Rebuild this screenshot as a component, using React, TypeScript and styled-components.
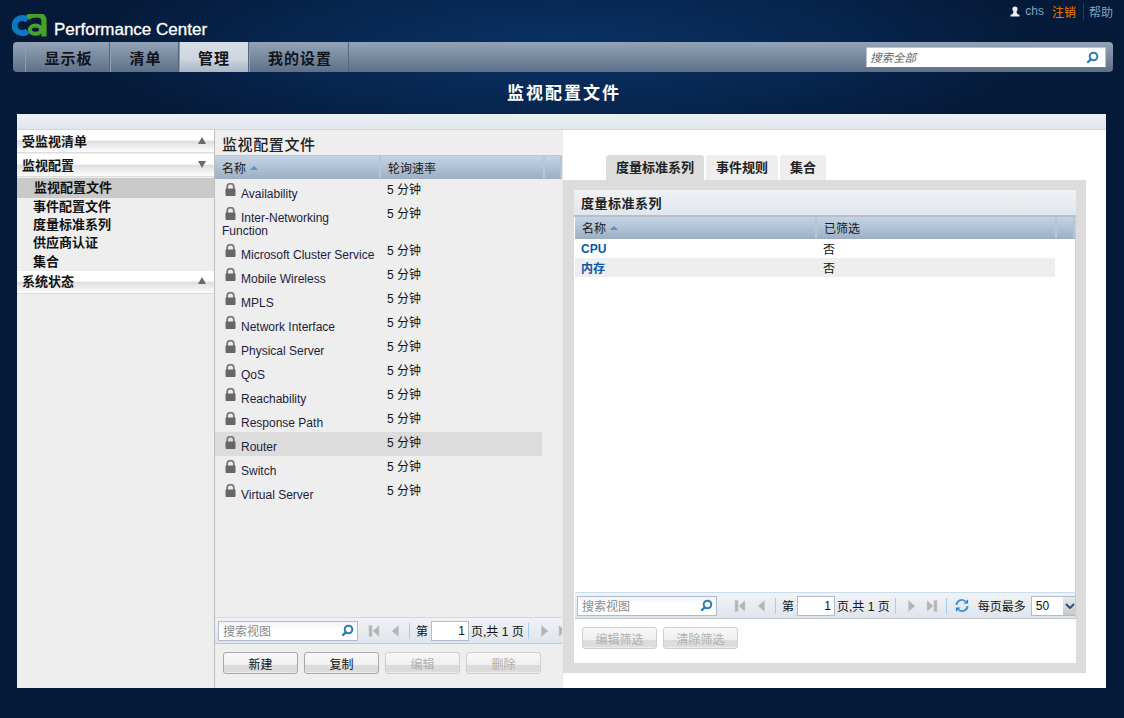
import React from "react";
import styled, { createGlobalStyle } from "styled-components";

const FONT = `"Liberation Sans", "Noto Sans CJK SC", sans-serif`;

const Global = createGlobalStyle`
  html, body { margin: 0; padding: 0; background: #051a38; }
  * { box-sizing: border-box; }
  body { font-family: ${FONT}; font-size: 12px; color: #111; }
`;

const Page = styled.div`
  width: 1124px;
  height: 718px;
  overflow: hidden;
  display: flex;
  flex-direction: column;
  background: radial-gradient(ellipse 480px 110px at 50% 48px, #0a3264 0%, #072650 55%, #051a38 100%);
`;

const Header = styled.header`
  height: 42px;
  display: flex;
  justify-content: space-between;
  padding: 13px 11px 0 12px;
`;

const Brand = styled.div`
  display: flex;
  align-items: flex-start;
  gap: 7px;
`;

const BrandName = styled.span`
  margin-top: 8px;
  color: #fff;
  font-size: 17px;
  line-height: 18px;
  font-weight: 400;
  -webkit-text-stroke: 0.3px #fff;
`;

const UserMenu = styled.div`
  display: flex;
  align-items: center;
  height: 16px;
  margin-top: -10px;
  font-size: 12px;
  color: #7fa3c0;
`;

const UserName = styled.span`
  margin: 0 8px 0 5px;
`;

const Logout = styled.span`
  color: #f47b00;
  padding-right: 7px;
  border-right: 1px solid #23405f;
  margin-right: 5px;
`;

const NavBar = styled.nav`
  width: 1100px;
  height: 30px;
  margin-left: 13px;
  display: flex;
  align-items: stretch;
  padding-left: 12px;
  border-radius: 4px;
  background: linear-gradient(#93a4b7, #5e7088);
`;

const NavTab = styled.div<{ $w: number; $active?: boolean }>`
  width: ${(p) => p.$w}px;
  display: flex;
  align-items: center;
  justify-content: center;
  padding-left: ${(p) => (p.$active ? 0 : 2)}px;
  border-left: 1px solid #8c9db1;
  border-right: 1px solid #55667e;
  font-size: 15px;
  font-weight: 700;
  letter-spacing: 1px;
  color: #10141c;
  background: ${(p) => (p.$active ? "linear-gradient(#d6dde6, #ced6e0 55%, #a9b6c6)" : "none")};
`;

const NavSearch = styled.div`
  width: 240px;
  height: 20px;
  margin: 5px 7px 0 auto;
  background: #fff;
  border: 1px solid #b8c4d4;
  border-bottom-color: #fff;
  display: flex;
  align-items: center;
  justify-content: space-between;
  padding: 0 6px 0 3px;
  font-style: italic;
  font-size: 11.5px;
  color: #666;
`;

const PageTitle = styled.h1`
  margin: 0;
  height: 42px;
  display: flex;
  align-items: center;
  justify-content: center;
  padding: 0 0 4px 4px;
  font-size: 17px;
  font-weight: 700;
  letter-spacing: 2px;
  color: #fff;
`;

const Panel = styled.main`
  width: 1089px;
  height: 574px;
  margin-left: 17px;
  display: flex;
  flex-direction: column;
  background: #fff;
`;

const PanelTop = styled.div`
  height: 16px;
  border-radius: 2px 2px 0 0;
  border-bottom: 1px solid #c9d8e8;
  background: linear-gradient(#eef1f4, #dfe6ee);
`;

const PanelBody = styled.div`
  flex: 1;
  min-height: 0;
  display: flex;
`;

const Sidebar = styled.aside`
  width: 198px;
  border-right: 1px solid #bdbdbd;
  background: #eee;
  display: flex;
  flex-direction: column;
`;

const AccHead = styled.div<{ $gap?: number }>`
  height: 23px;
  margin-bottom: ${(p) => p.$gap ?? 0}px;
  display: flex;
  align-items: center;
  justify-content: space-between;
  padding: 0 8px 2px 5px;
  font-size: 13px;
  font-weight: 700;
  color: #141414;
  border-bottom: 1px solid #ddd;
  background: linear-gradient(#fff 0%, #fff 45%, #dedede 52%, #fdfdfd 100%);
`;

const AccArrow = styled.span<{ $down?: boolean }>`
  width: 0;
  height: 0;
  border-left: 4.5px solid transparent;
  border-right: 4.5px solid transparent;
  ${(p) => (p.$down ? "border-top: 7px solid #6a6a6a;" : "border-bottom: 7px solid #6a6a6a;")}
`;

const SideList = styled.div`
  padding: 1px 0 0;
  display: flex;
  flex-direction: column;
`;

const SideItem = styled.div<{ $active?: boolean }>`
  height: ${(p) => (p.$active ? 20 : 18.2)}px;
  line-height: ${(p) => (p.$active ? 20 : 18)}px;
  padding-left: ${(p) => (p.$active ? 17 : 16)}px;
  font-size: 13px;
  font-weight: 700;
  color: #111;
  background: ${(p) => (p.$active ? "#c9c9c9" : "none")};
`;

const Middle = styled.section`
  width: 348px;
  background: #eee;
  display: flex;
  flex-direction: column;
  border-right: 1px solid #e8e8e8;
  overflow: hidden;
`;

const PaneHeading = styled.div`
  height: 26px;
  padding: 6px 0 0 7px;
  line-height: 18px;
  font-size: 15px;
  font-weight: 500;
  letter-spacing: 0.6px;
  color: #222;
  border-bottom: 1px solid #c4c8d0;
`;

const HeadRow = styled.div<{ $cols: string; $h: number }>`
  height: ${(p) => p.$h}px;
  flex: none;
  display: grid;
  grid-template-columns: ${(p) => p.$cols};
  background: linear-gradient(#c4d4e6, #9cafc3);
`;

const HeadCell = styled.div`
  display: flex;
  align-items: center;
  gap: 4px;
  padding-left: 7px;
  margin-bottom: 1px;
  font-size: 12px;
  color: #1a1a1a;
  border-right: 2px solid #b5c6d9;
`;

const SortArrow = styled.span`
  width: 0;
  height: 0;
  margin-top: 1px;
  border-left: 4px solid transparent;
  border-right: 4px solid transparent;
  border-bottom: 4px solid #5d8fcf;
`;

const RowList = styled.div`
  flex: 1;
  min-height: 0;
`;

const ProfileRow = styled.div<{ $selected?: boolean }>`
  width: 327px;
  display: grid;
  grid-template-columns: 165px 1fr;
  background: ${(p) => (p.$selected ? "#dcdcdc" : "none")};
`;

const ProfileName = styled.div`
  padding: 9px 3px 2px 7px;
  font-size: 12px;
  line-height: 13px;
  color: #1c1c3a;
`;

const ProfileLock = styled.svg`
  float: left;
  width: 11px;
  height: 13px;
  margin: -5px 5px 0 3px;
`;

const ProfileRate = styled.div`
  padding: 4px 0 0 7px;
  font-size: 12px;
  line-height: 14px;
  color: #111;
`;

const Toolbar = styled.div<{ $pad: number }>`
  height: 27px;
  flex: none;
  display: flex;
  align-items: center;
  padding-left: ${(p) => p.$pad}px;
  overflow: hidden;
  border-top: 1px solid #c9dcec;
  border-bottom: 1px solid #c2c7d2;
  background: linear-gradient(#f0f3f6, #dfe5ec);
  white-space: nowrap;
  font-size: 12px;
  color: #111;
`;

const SearchField = styled.div`
  width: 140px;
  height: 20px;
  flex: none;
  display: flex;
  align-items: center;
  justify-content: space-between;
  padding: 0 3px 0 4px;
  border: 1px solid #b3bacd;
  background: linear-gradient(#f0f3f8, #fff 40%);
  color: #8a8a8a;
  font-size: 12px;
`;

const PagerIcon = styled.svg<{ $m: string }>`
  width: 12px;
  height: 14px;
  flex: none;
  margin: ${(p) => p.$m};
`;

const Divider = styled.span<{ $m: string }>`
  width: 1px;
  height: 16px;
  flex: none;
  background: #a9cdf0;
  margin: ${(p) => p.$m};
`;

const PageInput = styled.div`
  width: 38px;
  height: 20px;
  flex: none;
  margin: 0 2px 0 3px;
  padding-right: 3px;
  line-height: 18px;
  text-align: right;
  border: 1px solid #b3bacd;
  background: #fff;
  color: #111;
`;

const PerPage = styled.span`
  margin: 0 5px 0 0;
`;

const SizeSelect = styled.div`
  width: 60px;
  height: 20px;
  flex: none;
  display: flex;
  border: 1px solid #b3bacd;
  background: #fff;
`;

const SizeValue = styled.span`
  width: 31px;
  flex: none;
  padding-left: 4px;
  line-height: 18px;
`;

const SizeCaret = styled.span`
  width: 14px;
  flex: none;
  display: flex;
  align-items: center;
  justify-content: center;
  background: linear-gradient(#e8e8e8, #c8c8c8);
`;

const ButtonRow = styled.div<{ $pad: string }>`
  display: flex;
  gap: 6px;
  padding: ${(p) => p.$pad};
`;

const Button = styled.div<{ $disabled?: boolean }>`
  width: 75px;
  height: 22px;
  display: flex;
  align-items: center;
  justify-content: center;
  font-size: 12px;
  color: ${(p) => (p.$disabled ? "#b0b0b0" : "#111")};
  border: 1px solid ${(p) => (p.$disabled ? "#cfcfcf" : "#a8a8a8")};
  border-radius: 3px;
  background: linear-gradient(#f8f8f8 0%, #f0f0f0 58%, #dcdcdc 60%, #dcdcdc 92%, #f2f2f2 100%);
`;

const Right = styled.section`
  flex: 1;
  min-width: 0;
  padding-top: 25px;
  display: flex;
  flex-direction: column;
  background: #fff;
`;

const Tabs = styled.div`
  height: 25px;
  padding-left: 43px;
  display: flex;
  gap: 2px;
`;

const Tab = styled.div<{ $active?: boolean }>`
  padding: 0 10px 2px;
  display: flex;
  align-items: center;
  font-size: 13px;
  font-weight: 700;
  color: #222;
  border-radius: 3px 3px 0 0;
  background: ${(p) => (p.$active ? "#dcdcdc" : "#eee")};
`;

const Frame = styled.div`
  width: 523px;
  height: 493px;
  padding: 10px 10px 10px 11px;
  background: #dcdcdc;
`;

const Inner = styled.div`
  height: 100%;
  display: flex;
  flex-direction: column;
  background: #fff;
  padding-left: 1px;
`;

const InnerHeading = styled.div`
  height: 27px;
  margin-left: -1px;
  flex: none;
  padding: 6px 0 0 7px;
  line-height: 16px;
  font-size: 13px;
  font-weight: 700;
  letter-spacing: 0.5px;
  color: #222;
  border-bottom: 2px solid #b9bdc8;
  background: linear-gradient(#f0f2f4, #dfe6ee);
`;

const MetricBody = styled.div`
  flex: 1;
  min-height: 0;
  display: flex;
  flex-direction: column;
  border-right: 1px solid #ccc;
`;

const MetricRows = styled.div`
  flex: 1;
`;

const MetricRow = styled.div<{ $alt?: boolean }>`
  width: 480px;
  height: 19px;
  display: grid;
  grid-template-columns: 242px 1fr;
  align-items: center;
  background: ${(p) => (p.$alt ? "#eee" : "#fff")};
`;

const MetricName = styled.span`
  padding-left: 6px;
  font-size: 12px;
  font-weight: 700;
  color: #0a56a8;
`;

const MetricValue = styled.span`
  padding-left: 6px;
  font-size: 12px;
  color: #111;
`;

const Spaced = styled.span`
  white-space: pre;
`;

const SearchIcon = () => (
  <svg width="13" height="13" viewBox="0 0 13 13" fill="none">
    <circle cx="7.5" cy="5.5" r="3.8" stroke="#2b7db8" strokeWidth="2" />
    <path d="M4.8 8.3 2 11" stroke="#2b7db8" strokeWidth="2.4" strokeLinecap="round" />
  </svg>
);

const Lock = () => (
  <ProfileLock viewBox="0 0 11 13">
    <path d="M2.2 6V3.8a3.3 3.3 0 0 1 6.6 0V6" fill="none" stroke="#777" strokeWidth="1.8" />
    <rect x="0.5" y="5.5" width="10" height="7.5" rx="1" fill="#666" />
  </ProfileLock>
);

const arrowFill = "#b4b4b4";
const arrowStroke = "#c9c9c9";

const First = ({ m }: { m: string }) => (
  <PagerIcon $m={m} viewBox="0 0 12 14">
    <rect x="1" y="1.5" width="3" height="11" fill={arrowFill} stroke={arrowStroke} strokeWidth="0.6" />
    <path d="M11 1.5v11L5 7z" fill={arrowFill} stroke={arrowStroke} strokeWidth="0.6" />
  </PagerIcon>
);
const Prev = ({ m }: { m: string }) => (
  <PagerIcon $m={m} viewBox="0 0 12 14">
    <path d="M9.5 1.5v11L3 7z" fill={arrowFill} stroke={arrowStroke} strokeWidth="0.6" />
  </PagerIcon>
);
const Next = ({ m }: { m: string }) => (
  <PagerIcon $m={m} viewBox="0 0 12 14">
    <path d="M2.5 1.5v11L9 7z" fill={arrowFill} stroke={arrowStroke} strokeWidth="0.6" />
  </PagerIcon>
);
const Last = ({ m }: { m: string }) => (
  <PagerIcon $m={m} viewBox="0 0 12 14">
    <path d="M1 1.5v11L7 7z" fill={arrowFill} stroke={arrowStroke} strokeWidth="0.6" />
    <rect x="8" y="1.5" width="3" height="11" fill={arrowFill} stroke={arrowStroke} strokeWidth="0.6" />
  </PagerIcon>
);

const RefreshIcon = styled.svg`
  flex: none;
  margin: 0 9px 0 8px;
`;

const Refresh = () => (
  <RefreshIcon width="14" height="15" viewBox="0 0 15 15" fill="none">
    <path d="M1.6 7A5.6 5.6 0 0 1 11 3" stroke="#3b93e0" strokeWidth="2" />
    <path d="M13.4 8A5.6 5.6 0 0 1 4 12" stroke="#3b93e0" strokeWidth="2" />
    <path d="M9 5.4h5V.8z" fill="#2f7fd0" />
    <path d="M6 9.6H1v4.6z" fill="#2f7fd0" />
  </RefreshIcon>
);

const LogoMark = styled.svg`
  margin-top: 1px;
  flex: none;
`;

const Logo = () => (
  <LogoMark width="35" height="23" viewBox="0 0 35 23" fill="none">
    <path d="M15.6 6.2A7.6 7.6 0 1 0 15.6 16.8" stroke="#0d78c2" strokeWidth="6" />
    <path d="M15.5 3.6C18 1.6 21 1 24.5 1c5 0 7.5 2 7.5 6v15.6" stroke="#46a32a" strokeWidth="5.2" fill="none" />
    <ellipse cx="23.5" cy="15.6" rx="5.6" ry="4.2" stroke="#46a32a" strokeWidth="4" />
  </LogoMark>
);

const Person = () => (
  <svg width="10" height="11" viewBox="0 0 10 11">
    <circle cx="5" cy="3" r="2.6" fill="#e8eef4" />
    <path d="M3.6 5h2.8L7 7.5 9.5 9v1.5H.5V9L3 7.5z" fill="#e8eef4" />
  </svg>
);

const profiles = [
  "Availability",
  "Inter-Networking Function",
  "Microsoft Cluster Service",
  "Mobile Wireless",
  "MPLS",
  "Network Interface",
  "Physical Server",
  "QoS",
  "Reachability",
  "Response Path",
  "Router",
  "Switch",
  "Virtual Server",
];

export default function App() {
  return (
    <Page>
      <Global />
      <Header>
        <Brand>
          <Logo />
          <BrandName>Performance Center</BrandName>
        </Brand>
        <UserMenu>
          <Person />
          <UserName>chs</UserName>
          <Logout>注销</Logout>
          <span>帮助</span>
        </UserMenu>
      </Header>
      <NavBar>
        <NavTab $w={85}>显示板</NavTab>
        <NavTab $w={69}>清单</NavTab>
        <NavTab $w={70} $active>管理</NavTab>
        <NavTab $w={100}>我的设置</NavTab>
        <NavSearch>
          <span>搜索全部</span>
          <SearchIcon />
        </NavSearch>
      </NavBar>
      <PageTitle>监视配置文件</PageTitle>
      <Panel>
        <PanelTop />
        <PanelBody>
          <Sidebar>
            <AccHead $gap={1}>受监视清单<AccArrow /></AccHead>
            <AccHead>监视配置<AccArrow $down /></AccHead>
            <SideList>
              <SideItem $active>监视配置文件</SideItem>
              <SideItem>事件配置文件</SideItem>
              <SideItem>度量标准系列</SideItem>
              <SideItem>供应商认证</SideItem>
              <SideItem>集合</SideItem>
            </SideList>
            <AccHead>系统状态<AccArrow /></AccHead>
          </Sidebar>
          <Middle>
            <PaneHeading>监视配置文件</PaneHeading>
            <HeadRow $h={23} $cols="166px 164px 1fr">
              <HeadCell>名称<SortArrow /></HeadCell>
              <HeadCell>轮询速率</HeadCell>
              <HeadCell />
            </HeadRow>
            <RowList>
              {profiles.map((name) => (
                <ProfileRow key={name} $selected={name === "Router"}>
                  <ProfileName>
                    <Lock />
                    {name}
                  </ProfileName>
                  <ProfileRate>5 分钟</ProfileRate>
                </ProfileRow>
              ))}
            </RowList>
            <Toolbar $pad={3}>
              <SearchField>
                <span>搜索视图</span>
                <SearchIcon />
              </SearchField>
              <First m="0 0 0 10px" />
              <Prev m="0 0 0 9px" />
              <Divider $m="0 6px 0 8px" />
              <span>第</span>
              <PageInput>1</PageInput>
              <Spaced>页,共 1 页</Spaced>
              <Divider $m="0 5px 0 4px" />
              <Next m="0 0 0 5px" />
              <Last m="0 0 0 7px" />
            </Toolbar>
            <ButtonRow $pad="8px 0 14px 8px">
              <Button>新建</Button>
              <Button>复制</Button>
              <Button $disabled>编辑</Button>
              <Button $disabled>删除</Button>
            </ButtonRow>
          </Middle>
          <Right>
            <Tabs>
              <Tab $active>度量标准系列</Tab>
              <Tab>事件规则</Tab>
              <Tab>集合</Tab>
            </Tabs>
            <Frame>
              <Inner>
                <InnerHeading>度量标准系列</InnerHeading>
                <MetricBody>
                  <HeadRow $h={22} $cols="242px 240px 1fr">
                    <HeadCell>名称<SortArrow /></HeadCell>
                    <HeadCell>已筛选</HeadCell>
                    <HeadCell />
                  </HeadRow>
                  <MetricRows>
                    <MetricRow>
                      <MetricName>CPU</MetricName>
                      <MetricValue>否</MetricValue>
                    </MetricRow>
                    <MetricRow $alt>
                      <MetricName>内存</MetricName>
                      <MetricValue>否</MetricValue>
                    </MetricRow>
                  </MetricRows>
                  <Toolbar $pad={2}>
                    <SearchField>
                      <span>搜索视图</span>
                      <SearchIcon />
                    </SearchField>
                    <First m="0 0 0 17px" />
                    <Prev m="0 0 0 9px" />
                    <Divider $m="0 6px 0 8px" />
                    <span>第</span>
                    <PageInput>1</PageInput>
                    <Spaced>页,共 1 页</Spaced>
                    <Divider $m="0 6px 0 5px" />
                    <Next m="0 0 0 4px" />
                    <Last m="0 0 0 8px" />
                    <Divider $m="0 0 0 8px" />
                    <Refresh />
                    <PerPage>每页最多</PerPage>
                    <SizeSelect>
                      <SizeValue>50</SizeValue>
                      <SizeCaret>
                        <svg width="10" height="6" viewBox="0 0 10 6">
                          <path d="M1 1l4 4 4-4" fill="none" stroke="#2c4f8a" strokeWidth="2" />
                        </svg>
                      </SizeCaret>
                    </SizeSelect>
                  </Toolbar>
                </MetricBody>
                <ButtonRow $pad="8px 0 14px 7px">
                  <Button $disabled>编辑筛选</Button>
                  <Button $disabled>清除筛选</Button>
                </ButtonRow>
              </Inner>
            </Frame>
          </Right>
        </PanelBody>
      </Panel>
    </Page>
  );
}
